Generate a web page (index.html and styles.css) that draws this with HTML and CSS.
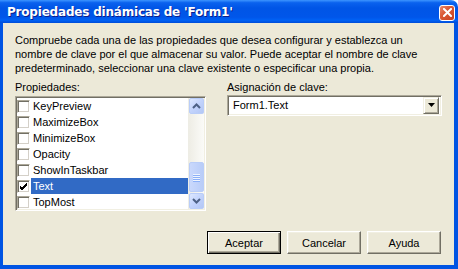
FILE: index.html
```html
<!DOCTYPE html>
<html lang="es">
<head>
    <meta charset="UTF-8">
    <title>Propiedades dinámicas de 'Form1'</title>
    <link rel="stylesheet" href="styles.css">
</head>
<body>
    <div class="window">
        <div class="titlebar">
            <span class="title">Propiedades dinámicas de 'Form1'</span>
            <span class="close-btn">
                <svg width="9" height="9" viewBox="0 0 9 9">
                    <path d="M1 1 L8 8 M8 1 L1 8" stroke="#fff" stroke-width="2" stroke-linecap="square"/>
                </svg>
            </span>
        </div>
        <div class="frame">
            <div class="client">
                <p class="intro">Compruebe cada una de las propiedades que desea configurar y establezca un<br>nombre de clave por el que almacenar su valor. Puede aceptar el nombre de clave<br>predeterminado, seleccionar una clave existente o especificar una propia.</p>

                <div class="fields">
                    <div class="field field-props">
                        <label>Propiedades:</label>
                        <div class="listbox">
                            <ul class="items">
                                <li><span class="check"></span><span class="item-text">KeyPreview</span></li>
                                <li><span class="check"></span><span class="item-text">MaximizeBox</span></li>
                                <li><span class="check"></span><span class="item-text">MinimizeBox</span></li>
                                <li><span class="check"></span><span class="item-text">Opacity</span></li>
                                <li><span class="check"></span><span class="item-text">ShowInTaskbar</span></li>
                                <li class="selected">
                                    <span class="check">
                                        <svg width="9" height="9" viewBox="0 0 9 9">
                                            <path d="M1 4 L3 6 L8 1 M1 5 L3 7 L8 2 M1 6 L3 8 L8 3" stroke="#000" stroke-width="1" fill="none"/>
                                        </svg>
                                    </span><span class="item-text">Text</span>
                                </li>
                                <li><span class="check"></span><span class="item-text">TopMost</span></li>
                            </ul>
                            <div class="scrollbar">
                                <div class="sb-btn">
                                    <svg width="9" height="6" viewBox="0 0 9 6">
                                        <path d="M1 5 L4.5 1.5 L8 5" stroke="#4D6185" stroke-width="2" fill="none"/>
                                    </svg>
                                </div>
                                <div class="sb-track">
                                    <div class="sb-thumb">
                                        <span></span><span></span><span></span><span></span>
                                    </div>
                                </div>
                                <div class="sb-btn">
                                    <svg width="9" height="6" viewBox="0 0 9 6">
                                        <path d="M1 1 L4.5 4.5 L8 1" stroke="#4D6185" stroke-width="2" fill="none"/>
                                    </svg>
                                </div>
                            </div>
                        </div>
                    </div>

                    <div class="field field-key">
                        <label>Asignación de clave:</label>
                        <div class="combo">
                            <span class="combo-text">Form1.Text</span>
                            <span class="combo-btn">
                                <svg width="7" height="4" viewBox="0 0 7 4">
                                    <path d="M0 0 H7 L3.5 4 Z" fill="#000"/>
                                </svg>
                            </span>
                        </div>
                    </div>
                </div>

                <div class="buttons">
                    <button class="btn btn-default">Aceptar</button>
                    <button class="btn">Cancelar</button>
                    <button class="btn">Ayuda</button>
                </div>
            </div>
        </div>
    </div>
</body>
</html>
```

FILE: styles.css
```css
body {
    margin: 0;
    padding: 0;
    background: #ffffff;
    font-family: 'Liberation Sans', Arial, sans-serif;
    font-size: 11px;
    color: #000;
}

.window {
    width: 458px;
    height: 269px;
    display: flex;
    flex-direction: column;
    overflow: hidden;
}

/* title bar */
.titlebar {
    height: 23px;
    flex: none;
    display: flex;
    align-items: center;
    justify-content: space-between;
    padding: 0 3px 0 7px;
    box-sizing: border-box;
    border-top-right-radius: 7px;
    background: linear-gradient(to bottom, #3D95FF 0%, #0A62EE 12%, #0055E6 35%, #0056EA 75%, #0062F5 88%, #004DD8 100%);
}

.title {
    color: #fff;
    font-family: 'DejaVu Sans', Verdana, sans-serif;
    font-weight: bold;
    font-size: 12px;
    letter-spacing: -0.2px;
    text-shadow: 1px 1px 0 #0A1E8C;
}

.close-btn {
    width: 16px;
    height: 16px;
    margin-top: 2px;
    border: 1px solid #fff;
    border-radius: 3px;
    box-sizing: border-box;
    display: flex;
    align-items: center;
    justify-content: center;
    background: linear-gradient(135deg, #E88A6E 0%, #DA5A36 40%, #C8401E 100%);
}

.frame {
    flex: 1;
    display: flex;
    border-left: 3px solid #0054E3;
    border-right: 4px solid #0054E3;
    border-bottom: 4px solid #0054E3;
    box-shadow: inset 1px 0 0 #0831D9, inset -1px 0 0 #0831D9, inset 0 -1px 0 #0831D9;
}

.client {
    flex: 1;
    background: #ECE9D8;
    padding: 10px 12px 0 12px;
    display: flex;
    flex-direction: column;
}

.intro {
    margin: 0;
    line-height: 14px;
}

/* fields */
.fields {
    display: flex;
    gap: 21px;
    margin-top: 5px;
}

.field label {
    display: block;
    line-height: 14px;
    margin-bottom: 2px;
}

.field-props {
    width: 191px;
}

.field-key {
    flex: 1;
}

.field-key label {
    margin-bottom: 1px;
}

/* listbox */
.listbox {
    height: 115px;
    box-sizing: border-box;
    background: #fff;
    border: 1px solid;
    border-color: #ACA899 #fff #fff #ACA899;
    box-shadow: inset 1px 1px 0 #716F64, inset -1px -1px 0 #F1EFE2;
    padding: 1px;
    display: flex;
}

.items {
    list-style: none;
    margin: 0;
    padding: 0;
    flex: 1;
}

.items li {
    height: 16px;
    display: flex;
    align-items: center;
}

.check {
    width: 13px;
    height: 13px;
    box-sizing: border-box;
    flex: none;
    background: #fff;
    border: 1px solid;
    border-color: #ACA899 #fff #fff #ACA899;
    box-shadow: inset 1px 1px 0 #716F64, inset -1px -1px 0 #D4D0C8;
    display: flex;
    align-items: center;
    justify-content: center;
}

.item-text {
    margin-left: 1px;
    padding-left: 2px;
    flex: 1;
    height: 16px;
    line-height: 16px;
}

.selected .item-text {
    background: #316AC5;
    color: #fff;
}

/* scrollbar */
.scrollbar {
    width: 16px;
    display: flex;
    flex-direction: column;
    background: #F3F1EC;
    border-left: 1px solid #EEEDE5;
    box-sizing: border-box;
}

.sb-btn {
    height: 16px;
    flex: none;
    box-sizing: border-box;
    border: 1px solid #B9CDF8;
    border-radius: 2px;
    background: linear-gradient(135deg, #DDE8FF 0%, #C2D3FC 50%, #B3C7F5 100%);
    display: flex;
    align-items: center;
    justify-content: center;
}

.sb-track {
    flex: 1;
    background: linear-gradient(to right, #EEEDE5, #FBFBF8);
}

.sb-thumb {
    margin-top: 48px;
    height: 30px;
    box-sizing: border-box;
    border: 1px solid #B9CDF8;
    border-radius: 2px;
    background: linear-gradient(to right, #C9D8FC, #B8CCF8);
    display: flex;
    flex-direction: column;
    align-items: center;
    justify-content: center;
    gap: 1px;
}

.sb-thumb span {
    width: 7px;
    height: 1px;
    background: #EEF4FE;
    box-shadow: 0 1px 0 #8CB0F8;
}

/* combo box */
.combo {
    height: 21px;
    box-sizing: border-box;
    background: #fff;
    border: 1px solid;
    border-color: #ACA899 #fff #fff #ACA899;
    box-shadow: inset 1px 1px 0 #716F64, inset -1px -1px 0 #F1EFE2;
    padding: 1px 2px 2px 1px;
    display: flex;
    align-items: center;
}

.combo-text {
    flex: 1;
    padding-left: 4px;
}

.combo-btn {
    width: 16px;
    height: 17px;
    box-sizing: border-box;
    background: #ECE9D8;
    border: 1px solid;
    border-color: #F1EFE2 #716F64 #716F64 #F1EFE2;
    box-shadow: inset 1px 1px 0 #fff, inset -1px -1px 0 #ACA899;
    display: flex;
    align-items: center;
    justify-content: center;
}

/* buttons */
.buttons {
    display: flex;
    justify-content: flex-end;
    gap: 6px;
    margin-top: 20px;
    padding-right: 1px;
}

.btn {
    width: 74px;
    height: 23px;
    box-sizing: border-box;
    font-family: 'Liberation Sans', Arial, sans-serif;
    font-size: 11px;
    color: #000;
    background: #ECE9D8;
    border: 1px solid;
    border-color: #fff #716F64 #716F64 #fff;
    box-shadow: inset -1px -1px 0 #ACA899, inset 1px 1px 0 #F1EFE2;
    padding: 0;
}

.btn-default {
    border: 1px solid #000;
    box-shadow: inset 1px 1px 0 #fff, inset -1px -1px 0 #716F64, inset -2px -2px 0 #ACA899;
}
```
